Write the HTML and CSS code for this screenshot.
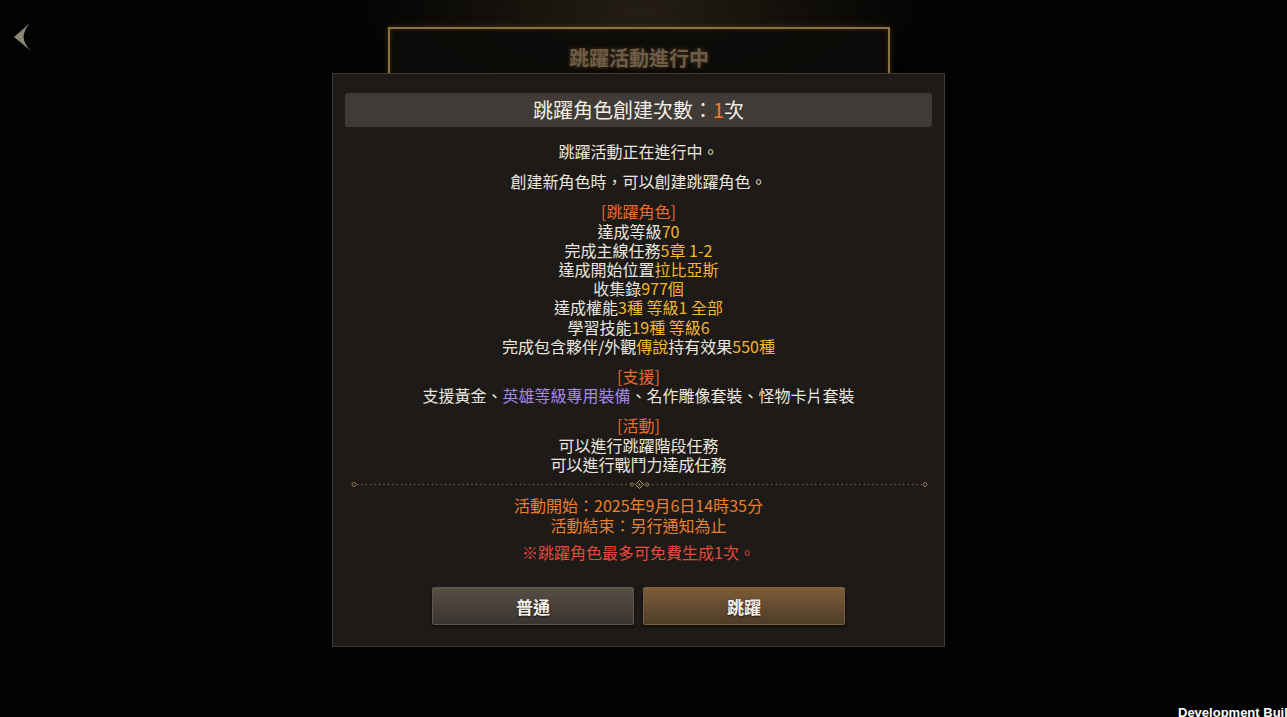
FILE: index.html
```html
<!DOCTYPE html>
<html lang="zh-Hant">
<head>
  <meta charset="UTF-8">
  <meta name="viewport" content="width=device-width, initial-scale=1.0">
  <title>跳躍活動</title>
  <link rel="stylesheet" href="styles.css">
</head>
<body>

  <div class="scene">
    <button class="back-btn" aria-label="返回">
      <svg width="20" height="30" viewBox="0 0 20 30">
        <path d="M17 1 L1 15 L18 29 Q11 22 10.5 15 Q11 8 17 1 Z" fill="#8c8676"/>
      </svg>
    </button>

    <div class="event-frame">
      <div class="event-title">跳躍活動進行中</div>
    </div>

    <div class="overlay">
      <div class="modal">
        <div class="modal-header">跳躍角色創建次數：<span class="orange">1</span>次</div>

        <div class="modal-body">
          <p>跳躍活動正在進行中。</p>
          <p>創建新角色時，可以創建跳躍角色。</p>

          <p>
            <span class="tag">[跳躍角色]</span><br>
            達成等級<span class="gold">70</span><br>
            完成主線任務<span class="gold">5章 1-2</span><br>
            達成開始位置<span class="gold">拉比亞斯</span><br>
            收集錄<span class="gold">977個</span><br>
            達成權能<span class="gold">3種 等級1 全部</span><br>
            學習技能<span class="gold">19種 等級6</span><br>
            完成包含夥伴/外觀<span class="gold">傳說</span>持有效果<span class="gold">550種</span>
          </p>

          <p>
            <span class="tag">[支援]</span><br>
            支援黃金、<span class="purple">英雄等級專用裝備</span>、名作雕像套裝、怪物卡片套裝
          </p>

          <p>
            <span class="tag">[活動]</span><br>
            可以進行跳躍階段任務<br>
            可以進行戰鬥力達成任務
          </p>

          <div class="divider">
            <svg width="577" height="9" viewBox="0 0 577 9">
              <line x1="6" y1="4.5" x2="280" y2="4.5" stroke="#8a7650" stroke-width="1.2" stroke-dasharray="1.2 3.2"/>
              <line x1="297" y1="4.5" x2="571" y2="4.5" stroke="#8a7650" stroke-width="1.2" stroke-dasharray="1.2 3.2"/>
              <circle cx="3" cy="4.5" r="2" fill="none" stroke="#8a7650" stroke-width="1"/>
              <circle cx="574" cy="4.5" r="2" fill="none" stroke="#8a7650" stroke-width="1"/>
              <circle cx="281" cy="4.5" r="1.6" fill="none" stroke="#9a8458" stroke-width="1"/>
              <circle cx="296" cy="4.5" r="1.6" fill="none" stroke="#9a8458" stroke-width="1"/>
              <path d="M288.5 0.5 L292.5 4.5 L288.5 8.5 L284.5 4.5 Z" fill="none" stroke="#b09a66" stroke-width="1"/>
              <circle cx="288.5" cy="4.5" r="1" fill="#b09a66"/>
            </svg>
          </div>

          <p class="dates">
            活動開始：2025年9月6日14時35分<br>
            活動結束：另行通知為止
          </p>

          <p class="warn">※跳躍角色最多可免費生成1次。</p>
        </div>

        <div class="modal-actions">
          <button class="btn btn-normal">普通</button>
          <button class="btn btn-jump">跳躍</button>
        </div>
      </div>
    </div>

    <div class="build-tag">Development Build</div>
  </div>

</body>
</html>
```

FILE: styles.css
```css
html, body {
  margin: 0;
  padding: 0;
  background: #000;
  overflow: hidden;
}

body {
  font-family: "Noto Sans CJK TC", "Noto Sans", sans-serif;
  color: #ebe6df;
}

.scene {
  position: relative;
  width: 1287px;
  height: 717px;
  background:
    radial-gradient(ellipse 420px 160px at 640px 10px, rgba(70, 58, 38, 0.5), rgba(0, 0, 0, 0) 70%),
    #020202;
  overflow: hidden;
}

.back-btn {
  position: absolute;
  top: 22px;
  left: 13px;
  padding: 0;
  border: none;
  background: none;
}

.back-btn svg {
  display: block;
}

.event-frame {
  width: 498px;
  height: 90px;
  margin: 27px 0 0 388px;
  border: 2px solid #8c7240;
  box-shadow: 0 0 6px rgba(160, 120, 50, 0.35), inset 0 0 5px rgba(160, 120, 50, 0.3);
  background: rgba(12, 11, 9, 0.9);
  box-sizing: content-box;
}

.event-title {
  margin-top: 15px;
  text-align: center;
  font-size: 20px;
  font-weight: bold;
  line-height: 28px;
  color: #6d5c48;
  text-shadow: 0 0 4px rgba(150, 110, 50, 0.5);
}

.overlay {
  position: absolute;
  top: 0;
  left: 0;
  right: 0;
  bottom: 0;
  padding-top: 73px;
}

.modal {
  width: 587px;
  margin-left: 332px;
  padding: 19px 12px 21px;
  background: #1d1a17;
  border: 1px solid #3d3935;
}

.modal-header {
  height: 34px;
  line-height: 34px;
  border-radius: 3px;
  background: #403b36;
  text-align: center;
  font-size: 20px;
  color: #f2eee8;
}

.orange {
  color: #ef7a2a;
}

.modal-body {
  padding-top: 4px;
  text-align: center;
  font-size: 16px;
  line-height: 19.2px;
}

.modal-body p {
  margin: 11px 0 0;
}

.tag {
  color: #ec6a2c;
}

.gold {
  color: #f2b52e;
}

.purple {
  color: #a689e6;
}

.divider {
  height: 9px;
  margin-top: 6px;
}

.divider svg {
  display: block;
  margin-left: 6px;
}

.modal-body p.dates {
  margin-top: 6px;
  color: #e8802e;
  line-height: 20px;
}

.modal-body p.warn {
  margin-top: 8px;
  color: #e34b3b;
}

.modal-actions {
  display: flex;
  justify-content: center;
  gap: 9px;
  margin-top: 25px;
}

.btn {
  width: 202px;
  height: 38px;
  border-radius: 2px;
  font-family: "Noto Sans CJK TC", sans-serif;
  font-size: 17px;
  font-weight: bold;
  color: #f4f0ea;
  cursor: pointer;
  text-shadow: 0 1px 2px rgba(0, 0, 0, 0.6);
  box-shadow: 0 2px 3px rgba(0, 0, 0, 0.5);
}

.btn-normal {
  background: linear-gradient(#574e45, #3a3430);
  border: 1px solid #5e554c;
}

.btn-jump {
  background: linear-gradient(#7d5c36, #4e3c28);
  border: 1px solid #7a6040;
}

.build-tag {
  position: absolute;
  left: 1178px;
  top: 704px;
  white-space: nowrap;
  font-family: "Liberation Sans", sans-serif;
  font-size: 13px;
  font-weight: bold;
  color: #fff;
  line-height: 18px;
}
```
